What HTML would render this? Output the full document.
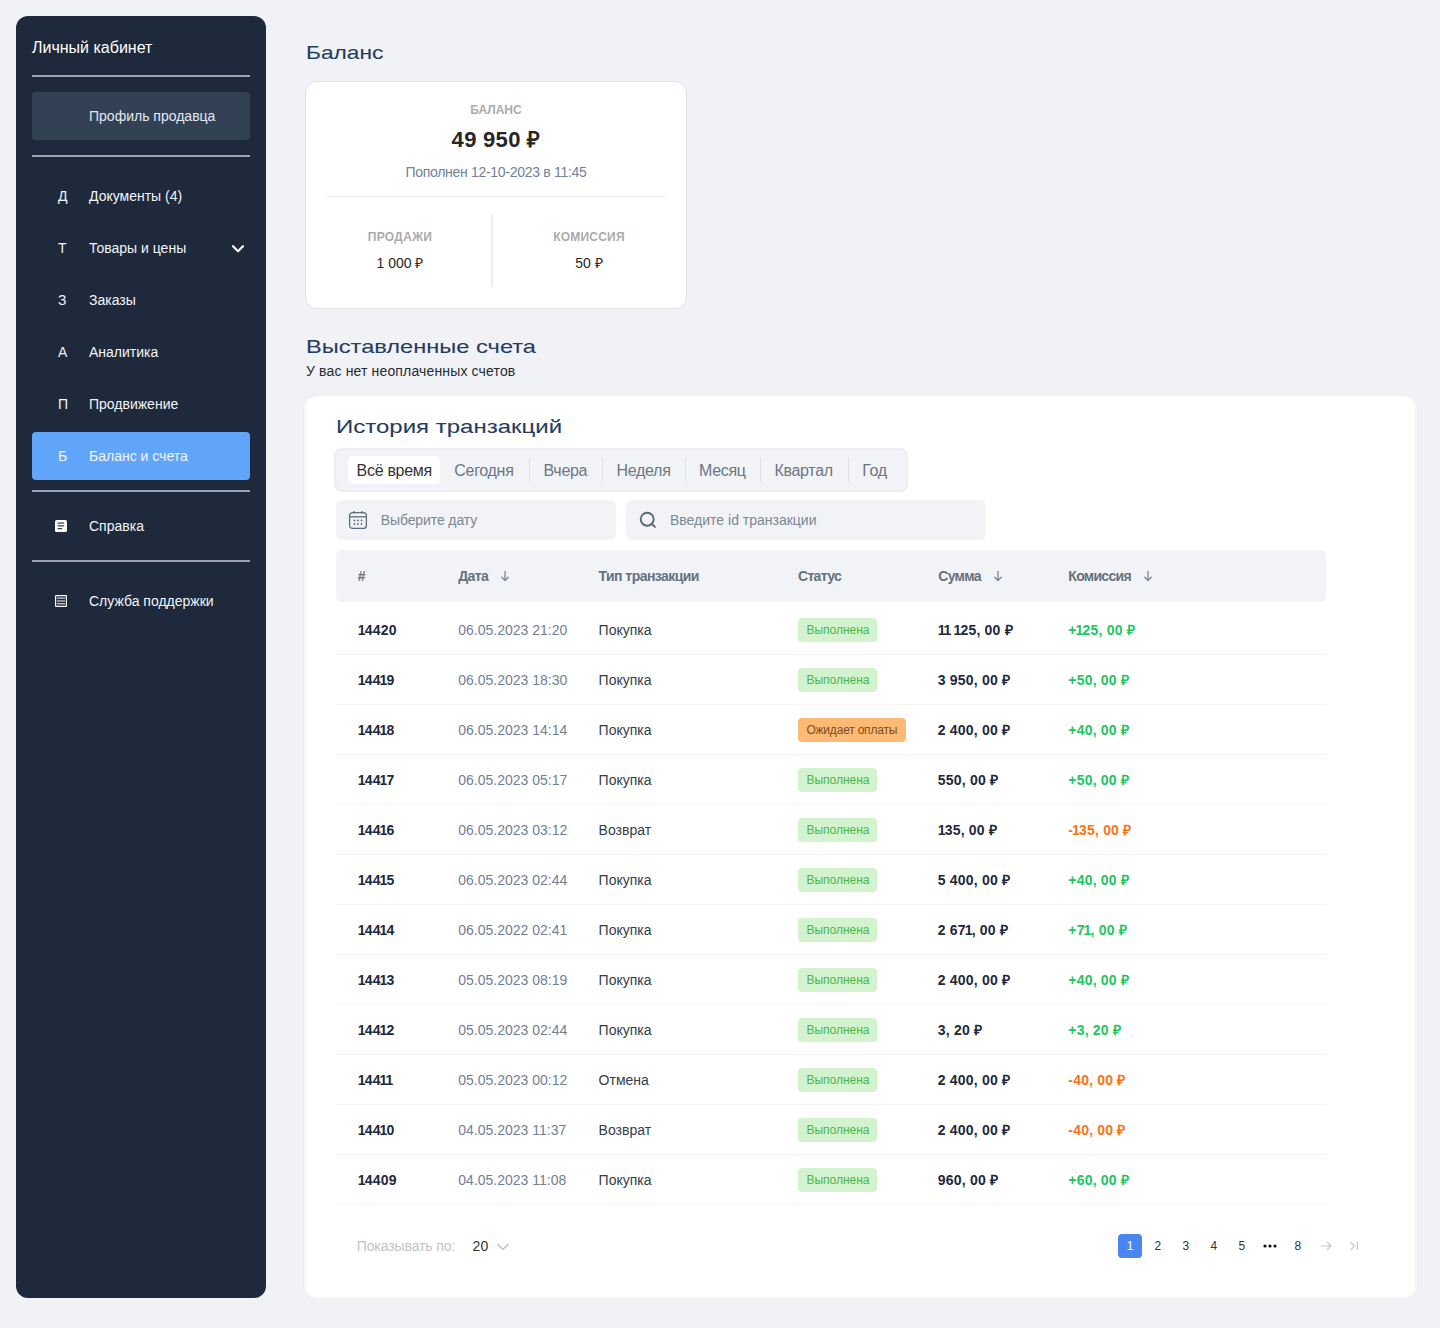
<!DOCTYPE html><html><head><meta charset="utf-8"><style>
*{margin:0;padding:0;box-sizing:border-box}
html,body{width:1440px;height:1328px;overflow:hidden;background:#f0f2f5;font-family:"Liberation Sans",sans-serif}
.t{position:absolute;line-height:1;white-space:nowrap}
.a{position:absolute}
.n1{font-style:normal;margin:0 -1.1px}
</style></head><body>
<div class="a" style="left:16px;top:16px;width:250px;height:1282px;background:#1e293b;border-radius:12px"></div><div class="t" style="left:32px;top:40.46px;font-size:16px;color:#ffffff;font-weight:400;letter-spacing:0px;">Личный кабинет</div>
<div class="a" style="left:32px;top:75px;width:218px;height:2px;background:#9ca3af"></div><div class="a" style="left:32px;top:92px;width:218px;height:48px;background:#334155;border-radius:4px"></div><div class="t" style="left:89px;top:109.15px;font-size:14px;color:#e2e8f0;font-weight:400;letter-spacing:0px;">Профиль продавца</div>
<div class="a" style="left:32px;top:155px;width:218px;height:2px;background:#9ca3af"></div><div class="t" style="left:58px;top:189.15px;font-size:14px;color:#f1f5f9;font-weight:400;letter-spacing:0px;">Д</div>
<div class="t" style="left:89px;top:189.15px;font-size:14px;color:#f1f5f9;font-weight:400;letter-spacing:0px;">Документы (4)</div>
<div class="t" style="left:58px;top:241.15px;font-size:14px;color:#f1f5f9;font-weight:400;letter-spacing:0px;">Т</div>
<div class="t" style="left:89px;top:241.15px;font-size:14px;color:#f1f5f9;font-weight:400;letter-spacing:0px;">Товары и цены</div>
<div class="t" style="left:58px;top:293.15px;font-size:14px;color:#f1f5f9;font-weight:400;letter-spacing:0px;">З</div>
<div class="t" style="left:89px;top:293.15px;font-size:14px;color:#f1f5f9;font-weight:400;letter-spacing:0px;">Заказы</div>
<div class="t" style="left:58px;top:345.15px;font-size:14px;color:#f1f5f9;font-weight:400;letter-spacing:0px;">А</div>
<div class="t" style="left:89px;top:345.15px;font-size:14px;color:#f1f5f9;font-weight:400;letter-spacing:0px;">Аналитика</div>
<div class="t" style="left:58px;top:397.15px;font-size:14px;color:#f1f5f9;font-weight:400;letter-spacing:0px;">П</div>
<div class="t" style="left:89px;top:397.15px;font-size:14px;color:#f1f5f9;font-weight:400;letter-spacing:0px;">Продвижение</div>
<div class="a" style="left:32px;top:432px;width:218px;height:48px;background:#60a5fa;border-radius:4px"></div><div class="t" style="left:58px;top:449.15px;font-size:14px;color:#f1f5f9;font-weight:400;letter-spacing:0px;">Б</div>
<div class="t" style="left:89px;top:449.15px;font-size:14px;color:#f1f5f9;font-weight:400;letter-spacing:0px;">Баланс и счета</div>
<svg class="a" style="left:231px;top:243px" width="14" height="10" viewBox="0 0 14 10"><path d="M2 3.2 L7 8.2 L12 3.2" fill="none" stroke="#ffffff" stroke-width="2.2" stroke-linecap="round" stroke-linejoin="round"/></svg><div class="a" style="left:32px;top:490px;width:218px;height:2px;background:#9ca3af"></div><svg class="a" style="left:55px;top:520px" width="12" height="12" viewBox="0 0 12 12"><rect x="0" y="0" width="12" height="12" rx="1.6" fill="#ffffff"/><rect x="2.6" y="2.5" width="6.6" height="1.1" fill="#1e293b"/><rect x="2.6" y="5.3" width="6.6" height="1.1" fill="#1e293b"/><rect x="2.6" y="8.1" width="4.4" height="1.1" fill="#1e293b"/></svg><div class="t" style="left:89px;top:519.15px;font-size:14px;color:#f1f5f9;font-weight:400;letter-spacing:0px;">Справка</div>
<div class="a" style="left:32px;top:560px;width:218px;height:2px;background:#9ca3af"></div><svg class="a" style="left:55px;top:595px" width="12" height="12" viewBox="0 0 12 12"><rect x="0.6" y="0.6" width="10.8" height="10.8" rx="0.6" fill="none" stroke="#ffffff" stroke-width="1.2"/><rect x="2" y="2.6" width="8" height="1" fill="#ffffff"/><rect x="2" y="5.5" width="8" height="1" fill="#ffffff"/><rect x="2" y="8.3" width="8" height="1" fill="#ffffff"/></svg><div class="t" style="left:89px;top:594.15px;font-size:14px;color:#f1f5f9;font-weight:400;letter-spacing:0px;">Служба поддержки</div>
<div class="t" style="left:306px;top:42.92px;font-size:19px;color:#263d62;font-weight:400;letter-spacing:0px;transform:scaleX(1.196);transform-origin:0 0;-webkit-text-stroke:0.08px #263d62">Баланс</div>
<div class="a" style="left:305px;top:81px;width:382px;height:228px;background:#fff;border:1px solid #dfe3e8;border-radius:12px"></div><div class="t" style="left:346px;width:300px;text-align:center;top:103.84px;font-size:12px;color:#ababab;font-weight:700;letter-spacing:0px;">БАЛАНС</div>
<div class="t" style="left:346px;width:300px;text-align:center;top:129.38px;font-size:22px;color:#262626;font-weight:700;letter-spacing:0.3px;">49 950 ₽</div>
<div class="t" style="left:346px;width:300px;text-align:center;top:164.65px;font-size:14px;color:#6f819b;font-weight:400;letter-spacing:-0.3px;">Пополнен 12-10-2023 в 11:45</div>
<div class="a" style="left:326px;top:196px;width:340px;height:1px;background:#eceef2"></div><div class="a" style="left:491px;top:214px;width:1.5px;height:73px;background:#eceef2"></div><div class="t" style="left:250px;width:300px;text-align:center;top:231.34px;font-size:12px;color:#ababab;font-weight:700;letter-spacing:0.3px;">ПРОДАЖИ</div>
<div class="t" style="left:250px;width:300px;text-align:center;top:256.15px;font-size:14px;color:#262626;font-weight:400;letter-spacing:0px;">1 000 ₽</div>
<div class="t" style="left:439px;width:300px;text-align:center;top:231.34px;font-size:12px;color:#ababab;font-weight:700;letter-spacing:0.2px;">КОМИССИЯ</div>
<div class="t" style="left:439px;width:300px;text-align:center;top:256.15px;font-size:14px;color:#262626;font-weight:400;letter-spacing:0px;">50 ₽</div>
<div class="t" style="left:305.5px;top:337.42px;font-size:19px;color:#263d62;font-weight:400;letter-spacing:0px;transform:scaleX(1.244);transform-origin:0 0;-webkit-text-stroke:0.08px #263d62">Выставленные счета</div>
<div class="t" style="left:306px;top:363.65px;font-size:14px;color:#262b33;font-weight:400;letter-spacing:0.15px;">У вас нет неоплаченных счетов</div>
<div class="a" style="left:304px;top:395px;width:1113px;height:904px;background:#fff;border:2px solid #f5f6f8;border-radius:12px;box-shadow:0 0 2px rgba(30,41,59,0.05)"></div><div class="t" style="left:336px;top:416.92px;font-size:19px;color:#263d62;font-weight:400;letter-spacing:0px;transform:scaleX(1.263);transform-origin:0 0;-webkit-text-stroke:0.08px #263d62">История транзакций</div>
<div class="a" style="left:334px;top:448px;width:574px;height:44px;background:#f1f3f6;border:2px solid #ebedf1;border-radius:8px"></div><div class="a" style="left:348px;top:456px;width:92px;height:28px;background:#fff;border-radius:5px"></div><div class="t" style="left:356.6px;top:463.46px;font-size:16px;color:#333333;font-weight:400;letter-spacing:-0.3px;">Всё время</div>
<div class="t" style="left:454.3px;top:463.46px;font-size:16px;color:#6b7785;font-weight:400;letter-spacing:-0.3px;">Сегодня</div>
<div class="t" style="left:543.5px;top:463.46px;font-size:16px;color:#6b7785;font-weight:400;letter-spacing:-0.3px;">Вчера</div>
<div class="t" style="left:616.5px;top:463.46px;font-size:16px;color:#6b7785;font-weight:400;letter-spacing:-0.3px;">Неделя</div>
<div class="t" style="left:699px;top:463.46px;font-size:16px;color:#6b7785;font-weight:400;letter-spacing:-0.3px;">Месяц</div>
<div class="t" style="left:774.4px;top:463.46px;font-size:16px;color:#6b7785;font-weight:400;letter-spacing:-0.3px;">Квартал</div>
<div class="t" style="left:862.3px;top:463.46px;font-size:16px;color:#6b7785;font-weight:400;letter-spacing:-0.3px;">Год</div>
<div class="a" style="left:529.2px;top:458px;width:1px;height:24px;background:#dcdfe4"></div><div class="a" style="left:602.1px;top:458px;width:1px;height:24px;background:#dcdfe4"></div><div class="a" style="left:685.1px;top:458px;width:1px;height:24px;background:#dcdfe4"></div><div class="a" style="left:760.0px;top:458px;width:1px;height:24px;background:#dcdfe4"></div><div class="a" style="left:848.25px;top:458px;width:1px;height:24px;background:#dcdfe4"></div><div class="a" style="left:336px;top:500px;width:280px;height:40px;background:#f1f3f6;border-radius:6px"></div><svg class="a" style="left:348px;top:510px" width="20" height="20" viewBox="0 0 20 20"><rect x="1.6" y="2.6" width="16.8" height="15.8" rx="3" fill="none" stroke="#5f6b7a" stroke-width="1.3"/><line x1="1.6" y1="6.8" x2="18.4" y2="6.8" stroke="#5f6b7a" stroke-width="1.3"/><line x1="6" y1="1" x2="6" y2="3.5" stroke="#5f6b7a" stroke-width="1.3"/><line x1="14" y1="1" x2="14" y2="3.5" stroke="#5f6b7a" stroke-width="1.3"/><g fill="#5f6b7a"><circle cx="6.5" cy="10.5" r="0.9"/><circle cx="10" cy="10.5" r="0.9"/><circle cx="13.5" cy="10.5" r="0.9"/><circle cx="6.5" cy="14" r="0.9"/><circle cx="10" cy="14" r="0.9"/><circle cx="13.5" cy="14" r="0.9"/></g></svg><div class="t" style="left:380.7px;top:513.15px;font-size:14px;color:#7b8794;font-weight:400;letter-spacing:-0.1px;">Выберите дату</div>
<div class="a" style="left:626px;top:500px;width:360px;height:40px;background:#f1f3f6;border-radius:6px"></div><svg class="a" style="left:638px;top:510px" width="20" height="20" viewBox="0 0 20 20"><circle cx="9.2" cy="9.2" r="6.5" fill="none" stroke="#5a6978" stroke-width="1.9"/><line x1="14" y1="14" x2="16.9" y2="16.9" stroke="#5a6978" stroke-width="2" stroke-linecap="round"/></svg><div class="t" style="left:670px;top:513.15px;font-size:14px;color:#7b8794;font-weight:400;letter-spacing:0px;">Введите id транзакции</div>
<div class="a" style="left:336px;top:550px;width:990px;height:52px;background:#f1f3f6;border-radius:6px"></div><div class="t" style="left:357.8px;top:569.15px;font-size:14px;color:#65717f;font-weight:700;letter-spacing:0px;">#</div>
<div class="t" style="left:458.3px;top:569.15px;font-size:14px;color:#65717f;font-weight:700;letter-spacing:-0.65px;">Дата</div>
<div class="t" style="left:598.6px;top:569.15px;font-size:14px;color:#65717f;font-weight:700;letter-spacing:-0.55px;">Тип транзакции</div>
<div class="t" style="left:798px;top:569.15px;font-size:14px;color:#65717f;font-weight:700;letter-spacing:-0.68px;">Статус</div>
<div class="t" style="left:938.3px;top:569.15px;font-size:14px;color:#65717f;font-weight:700;letter-spacing:-0.72px;">Сумма</div>
<div class="t" style="left:1068.3px;top:569.15px;font-size:14px;color:#65717f;font-weight:700;letter-spacing:-0.71px;">Комиссия</div>
<svg class="a" style="left:500px;top:569px" width="10" height="14" viewBox="0 0 10 14"><path d="M5 2.4 V11.3 M1.8 8.3 L5 11.5 L8.2 8.3" fill="none" stroke="#7a8593" stroke-width="1.3" stroke-linecap="round" stroke-linejoin="round"/></svg><svg class="a" style="left:993px;top:569px" width="10" height="14" viewBox="0 0 10 14"><path d="M5 2.4 V11.3 M1.8 8.3 L5 11.5 L8.2 8.3" fill="none" stroke="#7a8593" stroke-width="1.3" stroke-linecap="round" stroke-linejoin="round"/></svg><svg class="a" style="left:1143px;top:569px" width="10" height="14" viewBox="0 0 10 14"><path d="M5 2.4 V11.3 M1.8 8.3 L5 11.5 L8.2 8.3" fill="none" stroke="#7a8593" stroke-width="1.3" stroke-linecap="round" stroke-linejoin="round"/></svg><div class="t" style="left:358.90000000000003px;top:623.15px;font-size:14px;color:#1e293b;font-weight:700;letter-spacing:0.2px;"><i class="n1">1</i>4420</div>
<div class="t" style="left:458.3px;top:623.15px;font-size:14px;color:#718096;font-weight:400;letter-spacing:0px;">06.05.2023 21:20</div>
<div class="t" style="left:598.6px;top:623.15px;font-size:14px;color:#333d4a;font-weight:400;letter-spacing:0px;">Покупка</div>
<div class="a" style="left:798px;top:618px;width:79px;height:24px;background:#d3f3cf;border-radius:4px"></div><div class="t" style="left:806.4px;top:624.14px;font-size:12px;color:#4cb648;font-weight:400;letter-spacing:0px;">Выполнена</div>
<div class="t" style="left:938.9px;top:623.15px;font-size:14px;color:#1e293b;font-weight:700;letter-spacing:0.2px;"><i class="n1">1</i><i class="n1">1</i> <i class="n1">1</i>25, 00 ₽</div>
<div class="t" style="left:1068.3px;top:623.15px;font-size:14px;color:#22c55e;font-weight:700;letter-spacing:0.2px;">+<i class="n1">1</i>25, 00 ₽</div>
<div class="a" style="left:336px;top:654px;width:990px;height:1px;background:#f3f4f6"></div><div class="t" style="left:358.90000000000003px;top:673.15px;font-size:14px;color:#1e293b;font-weight:700;letter-spacing:0.2px;"><i class="n1">1</i>44<i class="n1">1</i>9</div>
<div class="t" style="left:458.3px;top:673.15px;font-size:14px;color:#718096;font-weight:400;letter-spacing:0px;">06.05.2023 18:30</div>
<div class="t" style="left:598.6px;top:673.15px;font-size:14px;color:#333d4a;font-weight:400;letter-spacing:0px;">Покупка</div>
<div class="a" style="left:798px;top:668px;width:79px;height:24px;background:#d3f3cf;border-radius:4px"></div><div class="t" style="left:806.4px;top:674.14px;font-size:12px;color:#4cb648;font-weight:400;letter-spacing:0px;">Выполнена</div>
<div class="t" style="left:937.8px;top:673.15px;font-size:14px;color:#1e293b;font-weight:700;letter-spacing:0.2px;">3 950, 00 ₽</div>
<div class="t" style="left:1068.3px;top:673.15px;font-size:14px;color:#22c55e;font-weight:700;letter-spacing:0.2px;">+50, 00 ₽</div>
<div class="a" style="left:336px;top:704px;width:990px;height:1px;background:#f3f4f6"></div><div class="t" style="left:358.90000000000003px;top:723.15px;font-size:14px;color:#1e293b;font-weight:700;letter-spacing:0.2px;"><i class="n1">1</i>44<i class="n1">1</i>8</div>
<div class="t" style="left:458.3px;top:723.15px;font-size:14px;color:#718096;font-weight:400;letter-spacing:0px;">06.05.2023 14:14</div>
<div class="t" style="left:598.6px;top:723.15px;font-size:14px;color:#333d4a;font-weight:400;letter-spacing:0px;">Покупка</div>
<div class="a" style="left:798px;top:718px;width:108px;height:24px;background:#fdba74;border-radius:4px"></div><div class="t" style="left:806.4px;top:724.14px;font-size:12px;color:#7c4a22;font-weight:400;letter-spacing:-0.2px;">Ожидает оплаты</div>
<div class="t" style="left:937.8px;top:723.15px;font-size:14px;color:#1e293b;font-weight:700;letter-spacing:0.2px;">2 400, 00 ₽</div>
<div class="t" style="left:1068.3px;top:723.15px;font-size:14px;color:#22c55e;font-weight:700;letter-spacing:0.2px;">+40, 00 ₽</div>
<div class="a" style="left:336px;top:754px;width:990px;height:1px;background:#f3f4f6"></div><div class="t" style="left:358.90000000000003px;top:773.15px;font-size:14px;color:#1e293b;font-weight:700;letter-spacing:0.2px;"><i class="n1">1</i>44<i class="n1">1</i>7</div>
<div class="t" style="left:458.3px;top:773.15px;font-size:14px;color:#718096;font-weight:400;letter-spacing:0px;">06.05.2023 05:17</div>
<div class="t" style="left:598.6px;top:773.15px;font-size:14px;color:#333d4a;font-weight:400;letter-spacing:0px;">Покупка</div>
<div class="a" style="left:798px;top:768px;width:79px;height:24px;background:#d3f3cf;border-radius:4px"></div><div class="t" style="left:806.4px;top:774.14px;font-size:12px;color:#4cb648;font-weight:400;letter-spacing:0px;">Выполнена</div>
<div class="t" style="left:937.8px;top:773.15px;font-size:14px;color:#1e293b;font-weight:700;letter-spacing:0.2px;">550, 00 ₽</div>
<div class="t" style="left:1068.3px;top:773.15px;font-size:14px;color:#22c55e;font-weight:700;letter-spacing:0.2px;">+50, 00 ₽</div>
<div class="a" style="left:336px;top:804px;width:990px;height:1px;background:#f3f4f6"></div><div class="t" style="left:358.90000000000003px;top:823.15px;font-size:14px;color:#1e293b;font-weight:700;letter-spacing:0.2px;"><i class="n1">1</i>44<i class="n1">1</i>6</div>
<div class="t" style="left:458.3px;top:823.15px;font-size:14px;color:#718096;font-weight:400;letter-spacing:0px;">06.05.2023 03:12</div>
<div class="t" style="left:598.6px;top:823.15px;font-size:14px;color:#333d4a;font-weight:400;letter-spacing:0px;">Возврат</div>
<div class="a" style="left:798px;top:818px;width:79px;height:24px;background:#d3f3cf;border-radius:4px"></div><div class="t" style="left:806.4px;top:824.14px;font-size:12px;color:#4cb648;font-weight:400;letter-spacing:0px;">Выполнена</div>
<div class="t" style="left:938.9px;top:823.15px;font-size:14px;color:#1e293b;font-weight:700;letter-spacing:0.2px;"><i class="n1">1</i>35, 00 ₽</div>
<div class="t" style="left:1068.3px;top:823.15px;font-size:14px;color:#f97316;font-weight:700;letter-spacing:0.2px;">-<i class="n1">1</i>35, 00 ₽</div>
<div class="a" style="left:336px;top:854px;width:990px;height:1px;background:#f3f4f6"></div><div class="t" style="left:358.90000000000003px;top:873.15px;font-size:14px;color:#1e293b;font-weight:700;letter-spacing:0.2px;"><i class="n1">1</i>44<i class="n1">1</i>5</div>
<div class="t" style="left:458.3px;top:873.15px;font-size:14px;color:#718096;font-weight:400;letter-spacing:0px;">06.05.2023 02:44</div>
<div class="t" style="left:598.6px;top:873.15px;font-size:14px;color:#333d4a;font-weight:400;letter-spacing:0px;">Покупка</div>
<div class="a" style="left:798px;top:868px;width:79px;height:24px;background:#d3f3cf;border-radius:4px"></div><div class="t" style="left:806.4px;top:874.14px;font-size:12px;color:#4cb648;font-weight:400;letter-spacing:0px;">Выполнена</div>
<div class="t" style="left:937.8px;top:873.15px;font-size:14px;color:#1e293b;font-weight:700;letter-spacing:0.2px;">5 400, 00 ₽</div>
<div class="t" style="left:1068.3px;top:873.15px;font-size:14px;color:#22c55e;font-weight:700;letter-spacing:0.2px;">+40, 00 ₽</div>
<div class="a" style="left:336px;top:904px;width:990px;height:1px;background:#f3f4f6"></div><div class="t" style="left:358.90000000000003px;top:923.15px;font-size:14px;color:#1e293b;font-weight:700;letter-spacing:0.2px;"><i class="n1">1</i>44<i class="n1">1</i>4</div>
<div class="t" style="left:458.3px;top:923.15px;font-size:14px;color:#718096;font-weight:400;letter-spacing:0px;">06.05.2022 02:41</div>
<div class="t" style="left:598.6px;top:923.15px;font-size:14px;color:#333d4a;font-weight:400;letter-spacing:0px;">Покупка</div>
<div class="a" style="left:798px;top:918px;width:79px;height:24px;background:#d3f3cf;border-radius:4px"></div><div class="t" style="left:806.4px;top:924.14px;font-size:12px;color:#4cb648;font-weight:400;letter-spacing:0px;">Выполнена</div>
<div class="t" style="left:937.8px;top:923.15px;font-size:14px;color:#1e293b;font-weight:700;letter-spacing:0.2px;">2 67<i class="n1">1</i>, 00 ₽</div>
<div class="t" style="left:1068.3px;top:923.15px;font-size:14px;color:#22c55e;font-weight:700;letter-spacing:0.2px;">+7<i class="n1">1</i>, 00 ₽</div>
<div class="a" style="left:336px;top:954px;width:990px;height:1px;background:#f3f4f6"></div><div class="t" style="left:358.90000000000003px;top:973.15px;font-size:14px;color:#1e293b;font-weight:700;letter-spacing:0.2px;"><i class="n1">1</i>44<i class="n1">1</i>3</div>
<div class="t" style="left:458.3px;top:973.15px;font-size:14px;color:#718096;font-weight:400;letter-spacing:0px;">05.05.2023 08:19</div>
<div class="t" style="left:598.6px;top:973.15px;font-size:14px;color:#333d4a;font-weight:400;letter-spacing:0px;">Покупка</div>
<div class="a" style="left:798px;top:968px;width:79px;height:24px;background:#d3f3cf;border-radius:4px"></div><div class="t" style="left:806.4px;top:974.14px;font-size:12px;color:#4cb648;font-weight:400;letter-spacing:0px;">Выполнена</div>
<div class="t" style="left:937.8px;top:973.15px;font-size:14px;color:#1e293b;font-weight:700;letter-spacing:0.2px;">2 400, 00 ₽</div>
<div class="t" style="left:1068.3px;top:973.15px;font-size:14px;color:#22c55e;font-weight:700;letter-spacing:0.2px;">+40, 00 ₽</div>
<div class="a" style="left:336px;top:1004px;width:990px;height:1px;background:#f3f4f6"></div><div class="t" style="left:358.90000000000003px;top:1023.15px;font-size:14px;color:#1e293b;font-weight:700;letter-spacing:0.2px;"><i class="n1">1</i>44<i class="n1">1</i>2</div>
<div class="t" style="left:458.3px;top:1023.15px;font-size:14px;color:#718096;font-weight:400;letter-spacing:0px;">05.05.2023 02:44</div>
<div class="t" style="left:598.6px;top:1023.15px;font-size:14px;color:#333d4a;font-weight:400;letter-spacing:0px;">Покупка</div>
<div class="a" style="left:798px;top:1018px;width:79px;height:24px;background:#d3f3cf;border-radius:4px"></div><div class="t" style="left:806.4px;top:1024.14px;font-size:12px;color:#4cb648;font-weight:400;letter-spacing:0px;">Выполнена</div>
<div class="t" style="left:937.8px;top:1023.15px;font-size:14px;color:#1e293b;font-weight:700;letter-spacing:0.2px;">3, 20 ₽</div>
<div class="t" style="left:1068.3px;top:1023.15px;font-size:14px;color:#22c55e;font-weight:700;letter-spacing:0.2px;">+3, 20 ₽</div>
<div class="a" style="left:336px;top:1054px;width:990px;height:1px;background:#f3f4f6"></div><div class="t" style="left:358.90000000000003px;top:1073.15px;font-size:14px;color:#1e293b;font-weight:700;letter-spacing:0.2px;"><i class="n1">1</i>44<i class="n1">1</i><i class="n1">1</i></div>
<div class="t" style="left:458.3px;top:1073.15px;font-size:14px;color:#718096;font-weight:400;letter-spacing:0px;">05.05.2023 00:12</div>
<div class="t" style="left:598.6px;top:1073.15px;font-size:14px;color:#333d4a;font-weight:400;letter-spacing:0px;">Отмена</div>
<div class="a" style="left:798px;top:1068px;width:79px;height:24px;background:#d3f3cf;border-radius:4px"></div><div class="t" style="left:806.4px;top:1074.14px;font-size:12px;color:#4cb648;font-weight:400;letter-spacing:0px;">Выполнена</div>
<div class="t" style="left:937.8px;top:1073.15px;font-size:14px;color:#1e293b;font-weight:700;letter-spacing:0.2px;">2 400, 00 ₽</div>
<div class="t" style="left:1068.3px;top:1073.15px;font-size:14px;color:#f97316;font-weight:700;letter-spacing:0.2px;">-40, 00 ₽</div>
<div class="a" style="left:336px;top:1104px;width:990px;height:1px;background:#f3f4f6"></div><div class="t" style="left:358.90000000000003px;top:1123.15px;font-size:14px;color:#1e293b;font-weight:700;letter-spacing:0.2px;"><i class="n1">1</i>44<i class="n1">1</i>0</div>
<div class="t" style="left:458.3px;top:1123.15px;font-size:14px;color:#718096;font-weight:400;letter-spacing:0px;">04.05.2023 11:37</div>
<div class="t" style="left:598.6px;top:1123.15px;font-size:14px;color:#333d4a;font-weight:400;letter-spacing:0px;">Возврат</div>
<div class="a" style="left:798px;top:1118px;width:79px;height:24px;background:#d3f3cf;border-radius:4px"></div><div class="t" style="left:806.4px;top:1124.14px;font-size:12px;color:#4cb648;font-weight:400;letter-spacing:0px;">Выполнена</div>
<div class="t" style="left:937.8px;top:1123.15px;font-size:14px;color:#1e293b;font-weight:700;letter-spacing:0.2px;">2 400, 00 ₽</div>
<div class="t" style="left:1068.3px;top:1123.15px;font-size:14px;color:#f97316;font-weight:700;letter-spacing:0.2px;">-40, 00 ₽</div>
<div class="a" style="left:336px;top:1154px;width:990px;height:1px;background:#f3f4f6"></div><div class="t" style="left:358.90000000000003px;top:1173.15px;font-size:14px;color:#1e293b;font-weight:700;letter-spacing:0.2px;"><i class="n1">1</i>4409</div>
<div class="t" style="left:458.3px;top:1173.15px;font-size:14px;color:#718096;font-weight:400;letter-spacing:0px;">04.05.2023 11:08</div>
<div class="t" style="left:598.6px;top:1173.15px;font-size:14px;color:#333d4a;font-weight:400;letter-spacing:0px;">Покупка</div>
<div class="a" style="left:798px;top:1168px;width:79px;height:24px;background:#d3f3cf;border-radius:4px"></div><div class="t" style="left:806.4px;top:1174.14px;font-size:12px;color:#4cb648;font-weight:400;letter-spacing:0px;">Выполнена</div>
<div class="t" style="left:937.8px;top:1173.15px;font-size:14px;color:#1e293b;font-weight:700;letter-spacing:0.2px;">960, 00 ₽</div>
<div class="t" style="left:1068.3px;top:1173.15px;font-size:14px;color:#22c55e;font-weight:700;letter-spacing:0.2px;">+60, 00 ₽</div>
<div class="a" style="left:336px;top:1204px;width:990px;height:1px;background:#f3f4f6"></div><div class="t" style="left:356.7px;top:1239.15px;font-size:14px;color:#c4c4c4;font-weight:400;letter-spacing:-0.1px;">Показывать по:</div>
<div class="t" style="left:472.6px;top:1239.15px;font-size:14px;color:#333333;font-weight:400;letter-spacing:0px;">20</div>
<svg class="a" style="left:496px;top:1242px" width="14" height="10" viewBox="0 0 14 10"><path d="M1.5 2 L7 7.5 L12.5 2" fill="none" stroke="#b8b8b8" stroke-width="1.1"/></svg><div class="a" style="left:1118px;top:1234px;width:24px;height:24px;background:#4a86f0;border-radius:4px"></div><div class="t" style="left:980px;width:300px;text-align:center;top:1240.34px;font-size:12px;color:#ffffff;font-weight:400;letter-spacing:0px;">1</div>
<div class="t" style="left:1007.75px;width:300px;text-align:center;top:1240.34px;font-size:12px;color:#333333;font-weight:400;letter-spacing:0px;">2</div>
<div class="t" style="left:1035.75px;width:300px;text-align:center;top:1240.34px;font-size:12px;color:#333333;font-weight:400;letter-spacing:0px;">3</div>
<div class="t" style="left:1063.75px;width:300px;text-align:center;top:1240.34px;font-size:12px;color:#333333;font-weight:400;letter-spacing:0px;">4</div>
<div class="t" style="left:1091.75px;width:300px;text-align:center;top:1240.34px;font-size:12px;color:#333333;font-weight:400;letter-spacing:0px;">5</div>
<div class="t" style="left:1147.75px;width:300px;text-align:center;top:1240.34px;font-size:12px;color:#333333;font-weight:400;letter-spacing:0px;">8</div>
<svg class="a" style="left:1263px;top:1243px" width="14" height="6" viewBox="0 0 14 6"><g fill="#111"><circle cx="2" cy="3" r="1.6"/><circle cx="7" cy="3" r="1.6"/><circle cx="12" cy="3" r="1.6"/></g></svg><svg class="a" style="left:1319px;top:1240px" width="14" height="12" viewBox="0 0 14 12"><path d="M2 6 H12 M8 2 L12 6 L8 10" fill="none" stroke="#c8c8c8" stroke-width="1.2"/></svg><svg class="a" style="left:1348px;top:1240px" width="12" height="12" viewBox="0 0 12 12"><path d="M2.5 2 L6.5 6 L2.5 10 M9.5 2 V10" fill="none" stroke="#c8c8c8" stroke-width="1.2"/></svg></body></html>
